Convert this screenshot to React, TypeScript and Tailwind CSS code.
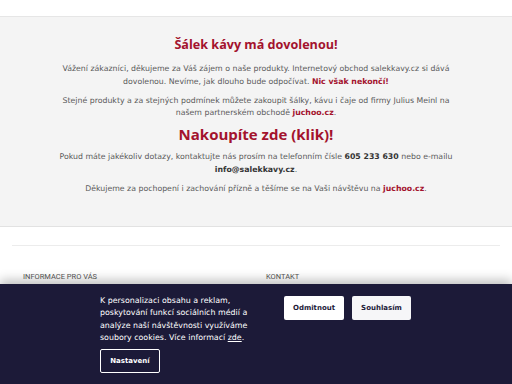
import React from 'react';

const body = { fontFamily: '"DejaVu Sans", "Open Sans", sans-serif' };
const head = { fontFamily: '"Open Sans", "Noto Sans", sans-serif' };

export default function App() {
  return (
    <div className="w-[512px] h-[384px] overflow-hidden relative bg-white" style={body}>
      <div className="h-[17px] bg-white border-b border-[#e6e6e6]" />

      {/* Notice */}
      <section className="h-[210px] bg-[#f4f4f4] border-b border-[#e2e2e2] flex flex-col items-center text-center pt-[18px] text-[7.8px] leading-[12.5px] text-[#5a5a5a]">
        <h1 className="text-[12.6px] leading-[20px] font-bold text-[#a3122d]" style={head}>Šálek kávy má dovolenou!</h1>
        <p className="mt-[8px] w-[408px]">
          Vážení zákazníci, děkujeme za Váš zájem o naše produkty. Internetový obchod salekkavy.cz si dává dovolenou. Nevíme, jak dlouho bude odpočívat. <b className="text-[#a3122d]">Nic však nekončí!</b>
        </p>
        <p className="mt-[7px] w-[408px] leading-[12px]">
          Stejné produkty a za stejných podmínek můžete zakoupit šálky, kávu i čaje od firmy Julius Meinl na našem partnerském obchodě <b className="text-[#a3122d]">juchoo.cz</b>.
        </p>
        <h2 className="mt-[3px] text-[15px] leading-[24px] font-bold text-[#a3122d]" style={head}>Nakoupíte zde (klik)!</h2>
        <p className="mt-[5px] w-[408px]">
          Pokud máte jakékoliv dotazy, kontaktujte nás prosím na telefonním čísle <b className="text-[#333]">605 233 630</b> nebo e-mailu <b className="text-[#333]">info@salekkavy.cz</b>.
        </p>
        <p className="mt-[7px] w-[408px]">
          Děkujeme za pochopení i zachování přízně a těšíme se na Vaši návštěvu na <b className="text-[#a3122d]">juchoo.cz</b>.
        </p>
      </section>

      {/* Footer */}
      <footer className="px-[12px] pt-[18px]">
        <div className="border-t border-[#ececec]" />
        <div className="flex pl-[11px] pt-[25px] text-[7.5px] text-[#555] uppercase" style={{ fontFamily: 'Roboto, sans-serif' }}>
          <span className="w-[243px]">Informace pro vás</span>
          <span>Kontakt</span>
        </div>
      </footer>

      {/* Cookie bar */}
      <div className="absolute left-0 right-0 bottom-0 h-[100px] bg-[#1c1a38] shadow-[0_-4px_10px_rgba(0,0,0,0.25)] flex gap-[26px] pl-[100px] pt-[11px]">
        <div className="w-[158px] flex flex-col items-start">
          <p className="text-[7.9px] leading-[12.3px] text-white">
            K personalizaci obsahu a reklam, poskytování funkcí sociálních médií a analýze naší návštěvnosti využíváme soubory cookies. Více informací <span className="underline">zde</span>.
          </p>
          <button className="mt-[5px] h-[24px] w-[60px] border border-white rounded-[2px] text-white text-[7px] font-bold">Nastavení</button>
        </div>
        <div className="flex gap-[8px] items-start pt-[1px]">
          <button className="h-[24px] w-[60px] bg-white rounded-[2px] text-[#1c1a38] text-[7px] font-bold">Odmitnout</button>
          <button className="h-[24px] w-[59px] bg-[#f6f6f8] rounded-[2px] text-[#1c1a38] text-[7px] font-bold">Souhlasím</button>
        </div>
      </div>
    </div>
  );
}
